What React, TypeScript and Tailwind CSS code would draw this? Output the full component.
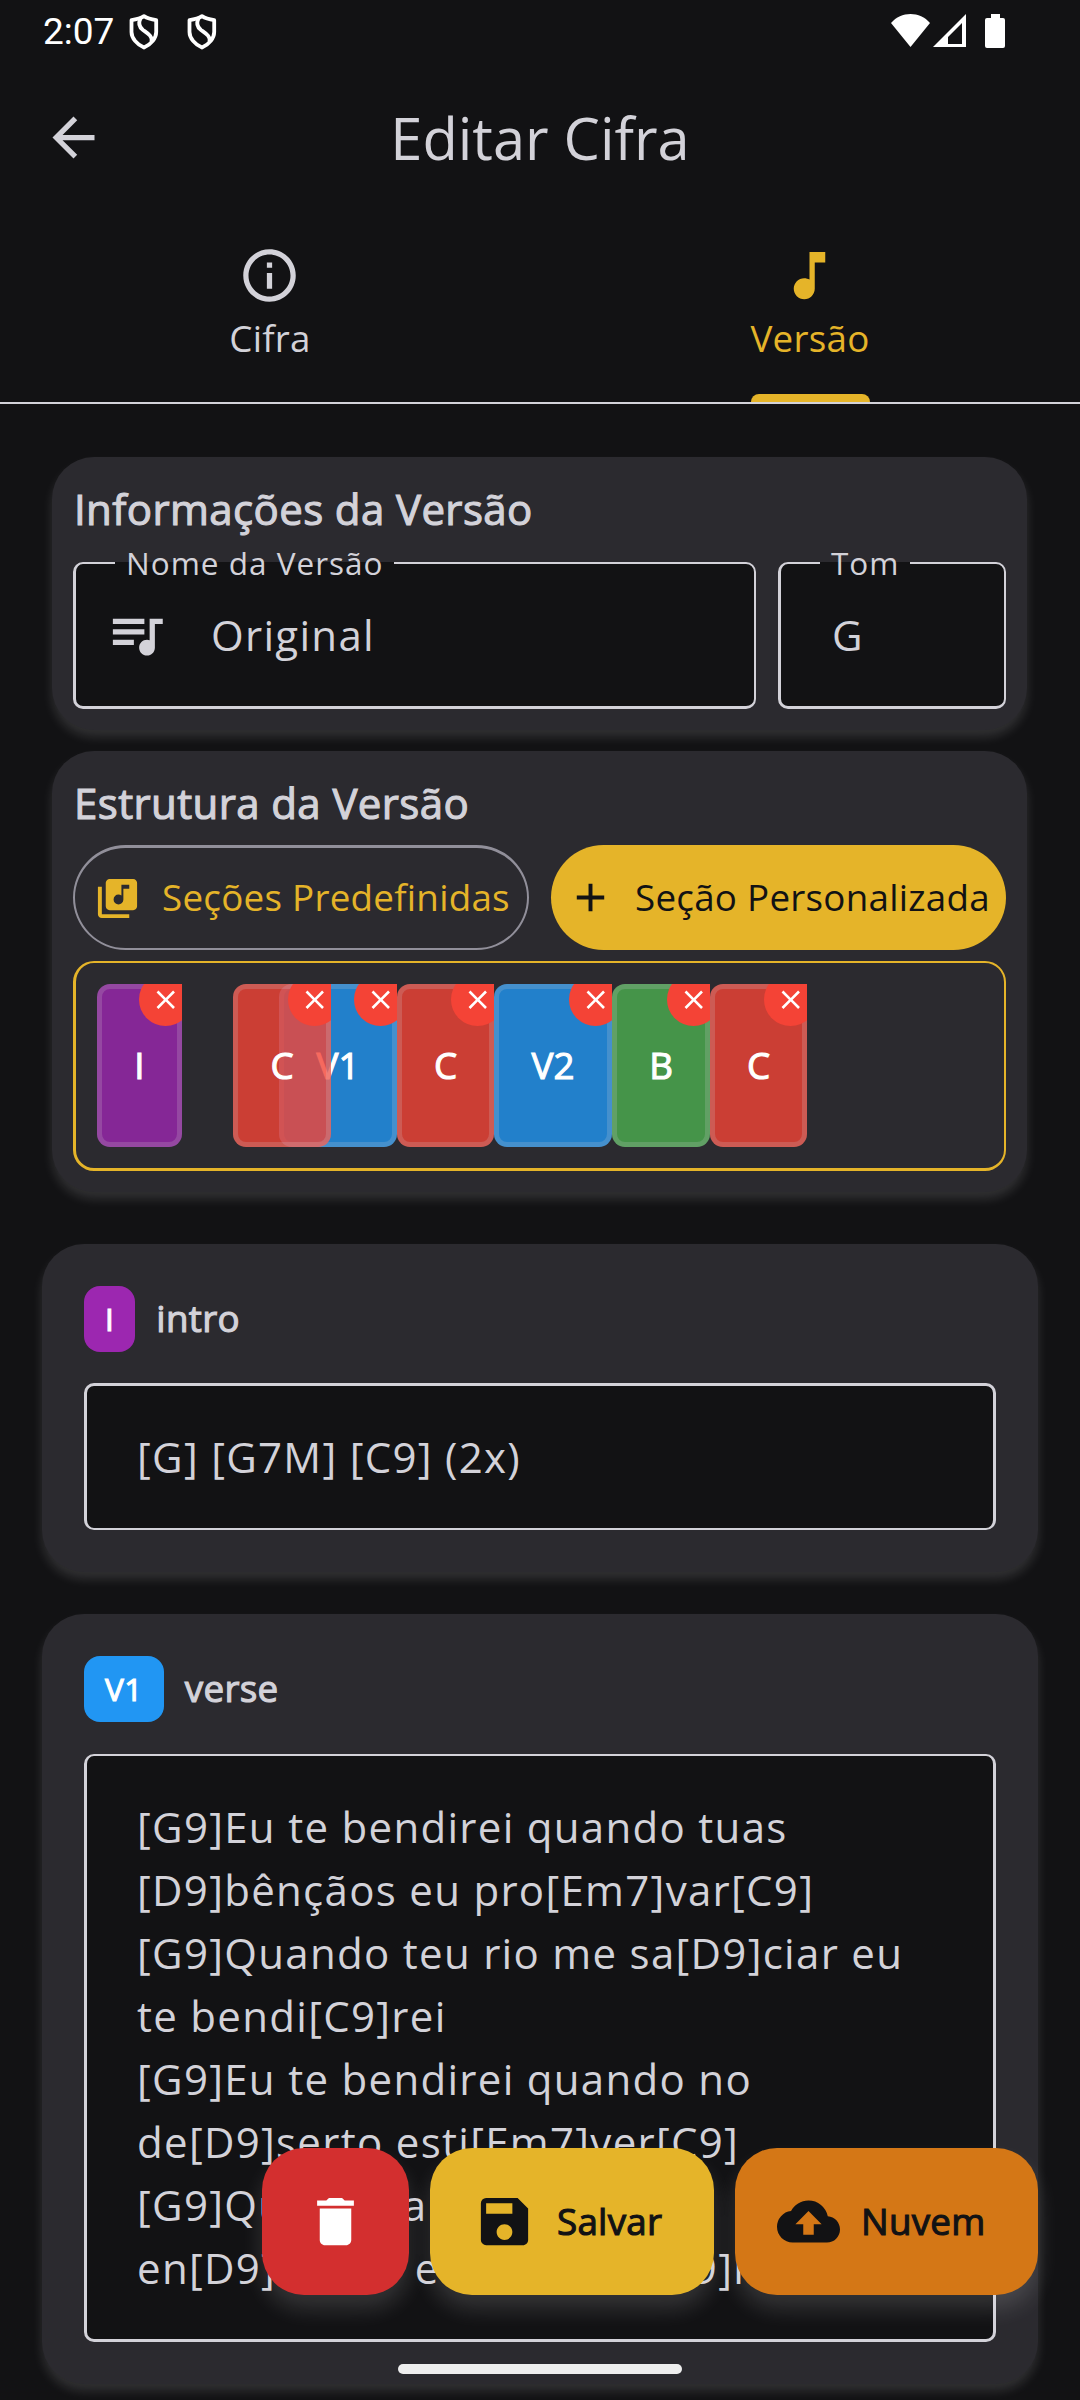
import type { ReactNode } from "react";
import {
  MdAdd,
  MdArrowBack,
  MdClose,
  MdCloudUpload,
  MdDelete,
  MdInfoOutline,
  MdLibraryMusic,
  MdMusicNote,
  MdQueueMusic,
  MdSave,
} from "react-icons/md";

const CARD = "bg-[#2b2a2f] rounded-[42px] shadow-[0_7px_11px_rgba(255,255,255,0.13)]";
const FIELD = "bg-[#121214] border-[#d3d2d9] rounded-[10px]";
const HEAVY = "[-webkit-text-stroke:1.1px_currentColor]";

function ShieldIcon() {
  return (
    <svg className="h-[36px] w-[30px]" viewBox="0 0 30 36" fill="none" stroke="white" strokeWidth="3.8" strokeLinejoin="round">
      <path d="M15 2.2C18 4.200 22.500 5.500 27.200 6.200V18c0 6-5 12.500-12.200 15.500C7.800 30.500 2.500 24 2.500 18V6.200C7.500 5.500 12 4.200 15 2.200z" />
      <path d="M11.500 4.500C9 9.500 9.800 12.800 14 16c5 3.600 9.500 6 8.500 11.500" />
    </svg>
  );
}

function StatusBar() {
  return (
    <div className="flex h-[62px] items-start pl-[43px] pr-[75px] pt-[14px] text-white">
      <span className="mt-[-4px] w-[86px] font-['Roboto'] text-[37px] leading-[43px]">2:07</span>
      <ShieldIcon />
      <span className="w-[28px]" />
      <ShieldIcon />
      <span className="flex-1" />
      <svg className="h-[34px] w-[114px]" viewBox="0 0 114 34" fill="white">
        <path d="M0 9C10-3 29-3 39 9L19.500 33z" />
        <path fillRule="evenodd" d="M42 33 75 0v33zM57 30h14V9L57 23z" />
        <path d="M100 0h9v4h3q2 0 2 2v26q0 2-2 2H96q-2 0-2-2V6q0-2 2-2h4z" />
      </svg>
    </div>
  );
}

function Tab({ icon, label, active }: { icon: ReactNode; label: string; active?: boolean }) {
  return (
    <div className={active ? "flex flex-1 flex-col items-center text-[#e5b429]" : "flex flex-1 flex-col items-center text-[#d3d2d9]"}>
      <div className="-ml-px text-[63px]">{icon}</div>
      <div className="mt-[4px] flex h-[93px] flex-col justify-between text-[36.750px] leading-[54px] tracking-[0.26px]">
        {label}
        {active && <span className="ml-px h-[8px] rounded-t-[8px] bg-[#e5b429]" />}
      </div>
    </div>
  );
}

function OutlinedField({ label, notch, children, className }: { label: string; notch: string; children: ReactNode; className: string }) {
  return (
    <div className={`relative flex h-[147px] items-center border-t-2 border-r-2 border-b-3 border-l-3 text-[42px] tracking-[1.300px] ${FIELD} ${className}`}>
      <div className={`absolute -top-[2px] left-[39px] h-[2px] bg-[#121214] ${notch}`} />
      <span className="absolute -top-[23px] left-[50px] text-[31.500px] leading-[43px] tracking-[1px] whitespace-nowrap">{label}</span>
      {children}
    </div>
  );
}

function Chip({ label, className, width }: { label: string; className: string; width: string }) {
  return (
    <div className={`relative h-[163px] shrink-0 overflow-hidden ${width}`}>
      <div className={`flex h-full items-center justify-center rounded-[13px] border-[5px] border-[#d3d2d9]/20 text-[36.750px] text-white ${HEAVY} ${className}`}>
        {label}
      </div>
      <div className="absolute -top-[11px] -right-[10px] flex size-[53px] items-center justify-center rounded-full bg-[#f44336] text-[31.500px] text-white">
        <MdClose />
      </div>
    </div>
  );
}

function SectionCard({ code, color, name, lines, field }: { code: string; color: string; name: string; lines: string[]; field: string }) {
  return (
    <section className={`mx-[42px] px-[42px] pt-[42px] pb-[42px] ${CARD}`}>
      <div className="flex h-[66px] items-center gap-[21px]">
        <span className={`flex h-[66px] items-center rounded-[16px] px-[21px] text-[31.500px] tracking-[0.500px] text-white ${HEAVY} ${color}`}>{code}</span>
        <span className={`text-[36.750px] tracking-[0.300px] ${HEAVY}`}>{name}</span>
      </div>
      <div className={`border-r-3 border-l-3 pt-[39px] pb-[40px] pl-[50px] text-[42px] leading-[63px] tracking-[1.300px] ${FIELD} ${field}`}>
        {lines.map((line, i) => (
          <div key={i} className="whitespace-nowrap">{line}</div>
        ))}
      </div>
    </section>
  );
}

const FAB = "flex h-[147px] items-center rounded-[42px] shadow-[0_14px_22px_rgba(255,255,255,0.14)]";

export default function App() {
  return (
    <div className="relative h-[2400px] w-[1080px] overflow-hidden bg-[#121214] font-['Open_Sans',sans-serif] text-[#d3d2d9]">
      <StatusBar />
      <header className="relative flex h-[150px] items-center justify-center text-[57.750px]">
        <MdArrowBack className="absolute left-[42px] size-[63px]" />
        <h1 className="pt-[3px]">Editar Cifra</h1>
      </header>
      <nav className="flex h-[192px] border-b-2 border-[#d3d2d9] pt-[32px]">
        <Tab icon={<MdInfoOutline />} label="Cifra" />
        <Tab icon={<MdMusicNote />} label="Versão" active />
      </nav>

      <main className="flex flex-col pt-[53px]">
        <section className={`mr-[53px] ml-[52px] h-[273px] pt-[20px] pl-[21px] ${CARD}`}>
          <h2 className={`h-[85px] pl-px text-[42px] leading-[63px] tracking-[0.390px] ${HEAVY}`}>Informações da Versão</h2>
          <div className="flex gap-[22px]">
            <OutlinedField label="Nome da Versão" notch="w-[279px]" className="w-[683px] pl-[29px]">
              <MdQueueMusic className="-mt-px size-[63px]" />
              <span className="-mt-[2px] ml-[43px]">Original</span>
            </OutlinedField>
            <OutlinedField label="Tom" notch="w-[90px]" className="w-[228px] pl-[51px]">
              <span className="-mt-[2px]">G</span>
            </OutlinedField>
          </div>
        </section>

        <section className={`mt-[21px] mr-[53px] ml-[52px] h-[441px] pt-[20px] pl-[21px] ${CARD}`}>
          <h2 className={`h-[74px] pl-px text-[42px] leading-[63px] tracking-[0.390px] ${HEAVY}`}>Estrutura da Versão</h2>
          <div className="flex gap-[22px] text-[36.750px] tracking-[0.260px] whitespace-nowrap">
            <button className="flex h-[105px] w-[456px] items-center gap-[21px] rounded-full border-2 border-t-3 border-[#918f9a] pl-[19px] text-[#e5b429]">
              <MdLibraryMusic className="size-[47px] shrink-0" />
              Seções Predefinidas
            </button>
            <button className="flex h-[105px] w-[455px] items-center gap-[21px] rounded-full bg-[#e5b429] pl-[16px] text-[#121214]">
              <MdAdd className="size-[47px] shrink-0" />
              Seção Personalizada
            </button>
          </div>
          <div className="mt-[11px] flex h-[210px] w-[933px] rounded-[21px] border-2 border-b-3 border-l-3 border-[#e5b429] pt-[21px] pl-[21px]">
            <Chip label="I" width="w-[85px]" className="bg-[#9c27b0]/80" />
            <div className="z-10 ml-[51px] flex">
              <Chip label="C" width="w-[98px]" className="bg-[#f44336]/80" />
            </div>
            <div className="-ml-[52px] flex">
              <Chip label="V1" width="w-[118px]" className="bg-[#2196f3]/80" />
            </div>
            <Chip label="C" width="w-[97px]" className="bg-[#f44336]/80" />
            <Chip label="V2" width="w-[118px]" className="bg-[#2196f3]/80" />
            <Chip label="B" width="w-[98px]" className="bg-[#4caf50]/80" />
            <Chip label="C" width="w-[97px]" className="bg-[#f44336]/80" />
          </div>
        </section>

        <div className="mt-[52px] flex flex-col gap-[42px]">
          <SectionCard code="I" color="bg-[#9c27b0]" name="intro" field="mt-[31px] border-t-3 border-b-2" lines={["[G] [G7M] [C9] (2x)"]} />
          <SectionCard
            code="V1"
            color="bg-[#2196f3]"
            name="verse"
            field="mt-[32px] border-t-2 border-b-3"
            lines={[
              "[G9]Eu te bendirei quando tuas",
              "[D9]bênçãos eu pro[Em7]var[C9]",
              "[G9]Quando teu rio me sa[D9]ciar eu",
              "te bendi[C9]rei",
              "[G9]Eu te bendirei quando no",
              "de[D9]serto esti[Em7]ver[C9]",
              "[G9]Quando a sequidão me",
              "en[D9]volver eu te bendi[C9]rei",
            ]}
          />
        </div>
      </main>

      <div className="absolute top-[2148px] right-[42px] z-20 flex gap-[21px] text-[36.750px] tracking-[0.260px] text-[#121214]">
        <button className={`w-[147px] justify-center bg-[#d32f2f] text-white ${FAB}`}>
          <MdDelete className="size-[63px]" />
        </button>
        <button className={`w-[284px] gap-[21px] bg-[#e5b429] pl-[43px] ${FAB}`}>
          <MdSave className="size-[63px]" />
          <span className={HEAVY}>Salvar</span>
        </button>
        <button className={`w-[303px] gap-[21px] bg-[#d47716] pl-[42px] ${FAB}`}>
          <MdCloudUpload className="size-[63px]" />
          <span className={HEAVY}>Nuvem</span>
        </button>
      </div>
      <div className="absolute bottom-[26px] left-[398px] z-20 h-[10px] w-[284px] rounded-full bg-[#eeeeee]" />
    </div>
  );
}
